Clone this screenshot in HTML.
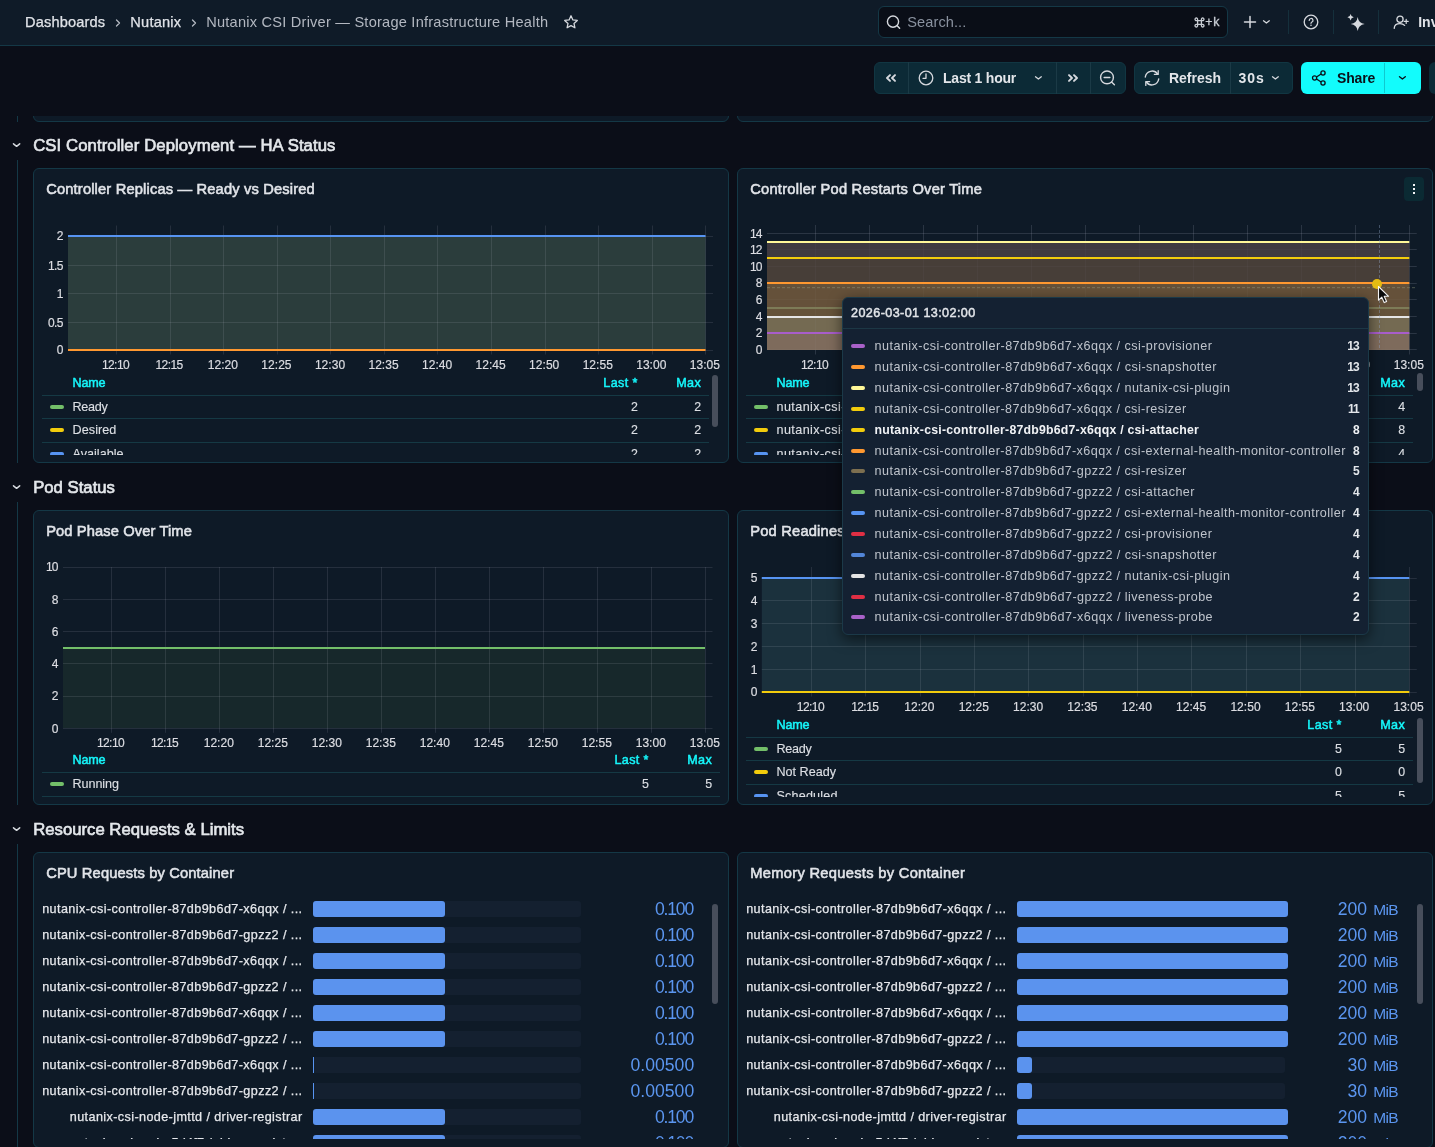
<!DOCTYPE html>
<html><head><meta charset="utf-8"><title>Nutanix CSI Driver — Storage Infrastructure Health</title>
<style>
html,body{margin:0;padding:0;}
body{width:1435px;height:1147px;overflow:hidden;position:relative;background:#0b0e18;font-family:"Liberation Sans",sans-serif;}
div{box-sizing:border-box;}
</style></head><body><div style="position:absolute;left:0;top:0;width:1435px;height:1147px;will-change:transform;">
<div style="position:absolute;left:33px;top:60px;width:696px;height:62px;box-sizing:border-box;background:#0e1a27;border:1px solid #143846;border-radius:6px;"></div>
<div style="position:absolute;left:737px;top:60px;width:696px;height:62px;box-sizing:border-box;background:#0e1a27;border:1px solid #143846;border-radius:6px;"></div>
<div style="position:absolute;left:17px;top:100px;width:1px;height:22px;box-sizing:border-box;background:#143846;"></div>
<div style="position:absolute;left:0px;top:46px;width:1435px;height:70px;box-sizing:border-box;background:#0b0e18;"></div>
<div style="position:absolute;left:0px;top:0px;width:1435px;height:46px;box-sizing:border-box;background:#0f1b28;border-bottom:1px solid #143846;"></div>
<div style="position:absolute;top:12px;height:20px;line-height:20px;font-size:14.6px;color:#e0e3e8;white-space:pre;-webkit-text-stroke:0.25px #e0e3e8;letter-spacing:0.142px;left:25.00px;">Dashboards</div>
<svg style="position:absolute;left:113.5px;top:17.5px;" width="8" height="10" viewBox="0 0 8 10"><path d="M2.5 2 L5.5 5 L2.5 8" fill="none" stroke="#b3b8c1" stroke-width="1.3" stroke-linecap="round" stroke-linejoin="round"/></svg>
<div style="position:absolute;top:12px;height:20px;line-height:20px;font-size:14.6px;color:#e0e3e8;white-space:pre;-webkit-text-stroke:0.25px #e0e3e8;letter-spacing:0.216px;left:130.30px;">Nutanix</div>
<svg style="position:absolute;left:189.7px;top:17.5px;" width="8" height="10" viewBox="0 0 8 10"><path d="M2.5 2 L5.5 5 L2.5 8" fill="none" stroke="#b3b8c1" stroke-width="1.3" stroke-linecap="round" stroke-linejoin="round"/></svg>
<div style="position:absolute;top:12px;height:20px;line-height:20px;font-size:14.6px;color:#b3b8c1;white-space:pre;letter-spacing:0.223px;left:206.20px;">Nutanix CSI Driver — Storage Infrastructure Health</div>
<svg style="position:absolute;left:563px;top:14px;" width="16" height="16" viewBox="0 0 16 16"><path d="M8 1.8 L9.9 5.9 L14.3 6.4 L11 9.4 L11.9 13.8 L8 11.6 L4.1 13.8 L5 9.4 L1.7 6.4 L6.1 5.9 Z" fill="none" stroke="#d6d9de" stroke-width="1.3" stroke-linejoin="round"/></svg>
<div style="position:absolute;left:878px;top:6px;width:350px;height:32px;box-sizing:border-box;background:#0a0e17;border:1px solid #143846;border-radius:6px;"></div>
<svg style="position:absolute;left:885px;top:14px;" width="17" height="17" viewBox="0 0 17 17"><circle cx="8" cy="7.6" r="5.6" fill="none" stroke="#d6d9de" stroke-width="1.4"/><path d="M12.2 11.8 L14.6 14.2" stroke="#d6d9de" stroke-width="1.5" stroke-linecap="round"/></svg>
<div style="position:absolute;top:12px;height:20px;line-height:20px;font-size:14.6px;color:#8a929f;white-space:pre;letter-spacing:0.071px;left:907.30px;">Search...</div>
<svg style="position:absolute;left:1193.5px;top:16.5px;" width="11" height="11" viewBox="0 0 11 11"><path d="M3.6 3.6 H7.4 V7.4 H3.6 Z M3.6 3.6 V2.4 A1.3 1.3 0 1 0 2.4 3.6 Z M7.4 3.6 H8.6 A1.3 1.3 0 1 0 7.4 2.4 Z M7.4 7.4 V8.6 A1.3 1.3 0 1 0 8.6 7.4 Z M3.6 7.4 H2.4 A1.3 1.3 0 1 0 3.6 8.6 Z" fill="none" stroke="#c9cdd4" stroke-width="1.3"/></svg>
<div style="position:absolute;top:13px;height:18px;line-height:18px;font-size:12.4px;color:#c9cdd4;white-space:pre;-webkit-text-stroke:0.3px #c9cdd4;letter-spacing:0.759px;left:1205.30px;">+k</div>
<svg style="position:absolute;left:1243px;top:15px;" width="14" height="14" viewBox="0 0 14 14"><path d="M7 1.5 V12.5 M1.5 7 H12.5" stroke="#d6d9de" stroke-width="1.5" stroke-linecap="round"/></svg>
<svg style="position:absolute;left:1262.3px;top:19.075px;" width="8.8" height="6.25" viewBox="0 0 8.8 6.25"><path d="M1.5 1.8 L4.4 4.05 L7.3 1.8" fill="none" stroke="#d6d9de" stroke-width="1.3" stroke-linecap="round" stroke-linejoin="round"/></svg>
<div style="position:absolute;left:1288.0px;top:10px;width:1px;height:24px;box-sizing:border-box;background:#15303c;"></div>
<div style="position:absolute;left:1333.0px;top:10px;width:1px;height:24px;box-sizing:border-box;background:#15303c;"></div>
<div style="position:absolute;left:1378.0px;top:10px;width:1px;height:24px;box-sizing:border-box;background:#15303c;"></div>
<svg style="position:absolute;left:1302px;top:13px;" width="18" height="18" viewBox="0 0 18 18"><circle cx="9" cy="9" r="6.8" fill="none" stroke="#d6d9de" stroke-width="1.3"/><path d="M7.2 7.4 A1.9 1.9 0 1 1 9.6 9.2 Q9 9.5 9 10.3" fill="none" stroke="#d6d9de" stroke-width="1.2" stroke-linecap="round"/><circle cx="9" cy="12.2" r="0.8" fill="#d6d9de"/></svg>
<svg style="position:absolute;left:1346px;top:12px;" width="20" height="20" viewBox="0 0 20 20"><path d="M11.7 5 Q12.5 11.2 18.7 12 Q12.5 12.8 11.7 19 Q10.9 12.8 4.7 12 Q10.9 11.2 11.7 5 Z" fill="#d6d9de"/><path d="M4.6 2 Q5 4.8 7.8 5.2 Q5 5.6 4.6 8.4 Q4.2 5.6 1.4 5.2 Q4.2 4.8 4.6 2 Z" fill="#d6d9de"/></svg>
<svg style="position:absolute;left:1391px;top:13px;" width="20" height="18" viewBox="0 0 20 18"><circle cx="9" cy="6.2" r="3.1" fill="none" stroke="#d6d9de" stroke-width="1.3"/><path d="M3.2 15.4 Q3.4 10.6 9 10.6 Q12 10.6 13.6 12.4" fill="none" stroke="#d6d9de" stroke-width="1.3" stroke-linecap="round"/><path d="M15.2 6.4 V10.4 M13.2 8.4 H17.2" stroke="#d6d9de" stroke-width="1.2" stroke-linecap="round"/></svg>
<div style="position:absolute;top:12px;height:20px;line-height:20px;font-size:14px;color:#e0e3e8;white-space:pre;font-weight:700;left:1418.20px;">Inv</div>
<div style="position:absolute;left:874px;top:62px;width:252px;height:32px;box-sizing:border-box;background:#0c2a36;border:1px solid #113642;border-radius:6px;"></div>
<div style="position:absolute;left:908px;top:62px;width:1px;height:32px;box-sizing:border-box;background:#1b3a46;"></div>
<div style="position:absolute;left:1056px;top:62px;width:1px;height:32px;box-sizing:border-box;background:#1b3a46;"></div>
<div style="position:absolute;left:1090px;top:62px;width:1px;height:32px;box-sizing:border-box;background:#1b3a46;"></div>
<svg style="position:absolute;left:885px;top:72px;" width="12" height="12" viewBox="0 0 12 12"><path d="M5.0 3.1 L2.0 6 L5.0 8.9 M10.0 3.1 L7.0 6 L10.0 8.9" fill="none" stroke="#d6d9de" stroke-width="1.9" stroke-linecap="round" stroke-linejoin="round"/></svg>
<svg style="position:absolute;left:1067px;top:72px;" width="12" height="12" viewBox="0 0 12 12"><path d="M2.0 3.1 L5.0 6 L2.0 8.9 M7.0 3.1 L10.0 6 L7.0 8.9" fill="none" stroke="#d6d9de" stroke-width="1.9" stroke-linecap="round" stroke-linejoin="round"/></svg>
<svg style="position:absolute;left:917px;top:69px;" width="18" height="18" viewBox="0 0 18 18"><circle cx="9" cy="9" r="6.8" fill="none" stroke="#d6d9de" stroke-width="1.3"/><path d="M9 5 V9.3 H6" fill="none" stroke="#d6d9de" stroke-width="1.3" stroke-linecap="round" stroke-linejoin="round"/></svg>
<div style="position:absolute;top:68px;height:20px;line-height:20px;font-size:14px;color:#e3e6ea;white-space:pre;font-weight:700;letter-spacing:-0.216px;left:943.00px;">Last 1 hour</div>
<svg style="position:absolute;left:1034.3px;top:75.175px;" width="8.8" height="6.25" viewBox="0 0 8.8 6.25"><path d="M1.5 1.8 L4.4 4.05 L7.3 1.8" fill="none" stroke="#d6d9de" stroke-width="1.3" stroke-linecap="round" stroke-linejoin="round"/></svg>
<svg style="position:absolute;left:1099px;top:69px;" width="18" height="18" viewBox="0 0 18 18"><circle cx="8" cy="8.4" r="6.4" fill="none" stroke="#d6d9de" stroke-width="1.4"/><path d="M5.2 8.4 H10.8" stroke="#d6d9de" stroke-width="1.5" stroke-linecap="round"/><path d="M12.8 13.2 L15.4 15.8" stroke="#d6d9de" stroke-width="1.4" stroke-linecap="round"/></svg>
<div style="position:absolute;left:1134px;top:62px;width:159px;height:32px;box-sizing:border-box;background:#0c2a36;border:1px solid #113642;border-radius:6px;"></div>
<div style="position:absolute;left:1230px;top:62px;width:1px;height:32px;box-sizing:border-box;background:#1b3a46;"></div>
<svg style="position:absolute;left:1143px;top:69px;" width="18" height="18" viewBox="0 0 18 18"><path d="M2.3 8 A6.8 6.8 0 0 1 14.6 5 M15.7 10 A6.8 6.8 0 0 1 3.4 13" fill="none" stroke="#d6d9de" stroke-width="1.4" stroke-linecap="round"/><path d="M15.2 1.6 V5.4 H11.4 M2.8 16.4 V12.6 H6.6" fill="none" stroke="#d6d9de" stroke-width="1.3" stroke-linecap="round" stroke-linejoin="round"/></svg>
<div style="position:absolute;top:68px;height:20px;line-height:20px;font-size:14px;color:#e3e6ea;white-space:pre;font-weight:700;letter-spacing:-0.022px;left:1169.00px;">Refresh</div>
<div style="position:absolute;top:68px;height:20px;line-height:20px;font-size:14px;color:#e3e6ea;white-space:pre;font-weight:700;letter-spacing:0.971px;left:1238.50px;">30s</div>
<svg style="position:absolute;left:1271.3999999999999px;top:75.175px;" width="8.8" height="6.25" viewBox="0 0 8.8 6.25"><path d="M1.5 1.8 L4.4 4.05 L7.3 1.8" fill="none" stroke="#d6d9de" stroke-width="1.3" stroke-linecap="round" stroke-linejoin="round"/></svg>
<div style="position:absolute;left:1301px;top:62px;width:120px;height:32px;box-sizing:border-box;background:#12fcfc;border-radius:6px;"></div>
<div style="position:absolute;left:1384px;top:63px;width:1px;height:30px;box-sizing:border-box;background:#0fc9cf;"></div>
<svg style="position:absolute;left:1310px;top:69px;" width="18" height="18" viewBox="0 0 18 18"><circle cx="13" cy="4" r="2.1" fill="none" stroke="#0b1018" stroke-width="1.3"/><circle cx="4.6" cy="9" r="2.1" fill="none" stroke="#0b1018" stroke-width="1.3"/><circle cx="13" cy="14" r="2.1" fill="none" stroke="#0b1018" stroke-width="1.3"/><path d="M6.5 8 L11.1 5 M6.5 10 L11.1 13" stroke="#0b1018" stroke-width="1.3"/></svg>
<div style="position:absolute;top:68px;height:20px;line-height:20px;font-size:14px;color:#0b1018;white-space:pre;font-weight:700;letter-spacing:-0.153px;left:1337.00px;">Share</div>
<svg style="position:absolute;left:1398.3px;top:75.175px;" width="8.8" height="6.25" viewBox="0 0 8.8 6.25"><path d="M1.5 1.8 L4.4 4.05 L7.3 1.8" fill="none" stroke="#0b1018" stroke-width="1.4" stroke-linecap="round" stroke-linejoin="round"/></svg>
<div style="position:absolute;left:1429px;top:62px;width:20px;height:32px;box-sizing:border-box;background:#0c2a36;border-radius:6px;"></div>
<svg style="position:absolute;left:12.1px;top:141.95px;" width="9.2" height="6.5" viewBox="0 0 9.2 6.5"><path d="M1.5 1.8 L4.6 4.3 L7.7 1.8" fill="none" stroke="#d6d9de" stroke-width="1.5" stroke-linecap="round" stroke-linejoin="round"/></svg>
<div style="position:absolute;top:134px;height:23px;line-height:23px;font-size:16.7px;color:#e4e7eb;white-space:pre;-webkit-text-stroke:0.65px #e4e7eb;letter-spacing:0.101px;left:33.20px;">CSI Controller Deployment — HA Status</div>
<div style="position:absolute;left:17px;top:160px;width:1px;height:303px;box-sizing:border-box;background:#143846;"></div>
<div style="position:absolute;left:33px;top:168px;width:696px;height:295px;box-sizing:border-box;background:#0e1a27;border:1px solid #143846;border-radius:6px;"></div>
<div style="position:absolute;top:179px;height:20px;line-height:20px;font-size:14.7px;color:#e1e4e9;white-space:pre;-webkit-text-stroke:0.55px #e1e4e9;letter-spacing:0.155px;left:46.20px;">Controller Replicas — Ready vs Desired</div>
<div style="position:absolute;left:737px;top:168px;width:696px;height:295px;box-sizing:border-box;background:#0e1a27;border:1px solid #143846;border-radius:6px;"></div>
<div style="position:absolute;top:179px;height:20px;line-height:20px;font-size:14.7px;color:#e1e4e9;white-space:pre;-webkit-text-stroke:0.55px #e1e4e9;letter-spacing:0.229px;left:750.20px;">Controller Pod Restarts Over Time</div>
<div style="position:absolute;left:1404px;top:177px;width:20px;height:24px;box-sizing:border-box;background:#0b2a33;border-radius:4px;"></div>
<div style="position:absolute;left:1413.2px;top:184.2px;width:2px;height:2px;box-sizing:border-box;background:#f2f4f6;"></div>
<div style="position:absolute;left:1413.2px;top:188.2px;width:2px;height:2px;box-sizing:border-box;background:#f2f4f6;"></div>
<div style="position:absolute;left:1413.2px;top:192.2px;width:2px;height:2px;box-sizing:border-box;background:#f2f4f6;"></div>
<svg style="position:absolute;left:33px;top:168px;" width="696" height="296" viewBox="0 0 696 296"><rect x="35.00" y="68.00" width="637.50" height="114.00" fill="#2b3d3c"/><path d="M83.50 57.50 V186.50 M137.50 57.50 V186.50 M190.50 57.50 V186.50 M244.50 57.50 V186.50 M297.50 57.50 V186.50 M351.50 57.50 V186.50 M404.50 57.50 V186.50 M458.50 57.50 V186.50 M512.50 57.50 V186.50 M565.50 57.50 V186.50 M619.50 57.50 V186.50 M672.50 57.50 V186.50 M35.00 68.50 H680.00 M35.00 97.50 H680.00 M35.00 125.50 H680.00 M35.00 154.50 H680.00 M35.00 182.50 H680.00" stroke="rgba(204,204,220,0.12)" stroke-width="1" fill="none"/><path d="M35.00 68.00 H672.50" stroke="#5794f2" stroke-width="2" fill="none"/><path d="M35.00 182.00 H672.50" stroke="#ff9830" stroke-width="2" fill="none"/></svg>
<div style="position:absolute;top:227px;height:18px;line-height:18px;font-size:12px;color:#dcdde2;white-space:pre;-webkit-text-stroke:0.2px #dcdde2;left:56.83px;">2</div>
<div style="position:absolute;top:257px;height:18px;line-height:18px;font-size:12px;color:#dcdde2;white-space:pre;-webkit-text-stroke:0.2px #dcdde2;letter-spacing:-0.584px;left:47.99px;">1.5</div>
<div style="position:absolute;top:285px;height:18px;line-height:18px;font-size:12px;color:#dcdde2;white-space:pre;-webkit-text-stroke:0.2px #dcdde2;left:56.83px;">1</div>
<div style="position:absolute;top:314px;height:18px;line-height:18px;font-size:12px;color:#dcdde2;white-space:pre;-webkit-text-stroke:0.2px #dcdde2;letter-spacing:-0.584px;left:47.99px;">0.5</div>
<div style="position:absolute;top:341px;height:18px;line-height:18px;font-size:12px;color:#dcdde2;white-space:pre;-webkit-text-stroke:0.2px #dcdde2;left:56.83px;">0</div>
<div style="position:absolute;top:356px;height:18px;line-height:18px;font-size:12px;color:#dcdde2;white-space:pre;-webkit-text-stroke:0.2px #dcdde2;letter-spacing:-0.557px;left:101.90px;">12:10</div>
<div style="position:absolute;top:356px;height:18px;line-height:18px;font-size:12px;color:#dcdde2;white-space:pre;-webkit-text-stroke:0.2px #dcdde2;letter-spacing:-0.557px;left:155.45px;">12:15</div>
<div style="position:absolute;top:356px;height:18px;line-height:18px;font-size:12px;color:#dcdde2;white-space:pre;-webkit-text-stroke:0.2px #dcdde2;letter-spacing:0.043px;left:207.80px;">12:20</div>
<div style="position:absolute;top:356px;height:18px;line-height:18px;font-size:12px;color:#dcdde2;white-space:pre;-webkit-text-stroke:0.2px #dcdde2;letter-spacing:0.043px;left:261.35px;">12:25</div>
<div style="position:absolute;top:356px;height:18px;line-height:18px;font-size:12px;color:#dcdde2;white-space:pre;-webkit-text-stroke:0.2px #dcdde2;letter-spacing:0.043px;left:314.90px;">12:30</div>
<div style="position:absolute;top:356px;height:18px;line-height:18px;font-size:12px;color:#dcdde2;white-space:pre;-webkit-text-stroke:0.2px #dcdde2;letter-spacing:0.043px;left:368.45px;">12:35</div>
<div style="position:absolute;top:356px;height:18px;line-height:18px;font-size:12px;color:#dcdde2;white-space:pre;-webkit-text-stroke:0.2px #dcdde2;letter-spacing:0.043px;left:422.00px;">12:40</div>
<div style="position:absolute;top:356px;height:18px;line-height:18px;font-size:12px;color:#dcdde2;white-space:pre;-webkit-text-stroke:0.2px #dcdde2;letter-spacing:0.043px;left:475.55px;">12:45</div>
<div style="position:absolute;top:356px;height:18px;line-height:18px;font-size:12px;color:#dcdde2;white-space:pre;-webkit-text-stroke:0.2px #dcdde2;letter-spacing:0.043px;left:529.10px;">12:50</div>
<div style="position:absolute;top:356px;height:18px;line-height:18px;font-size:12px;color:#dcdde2;white-space:pre;-webkit-text-stroke:0.2px #dcdde2;letter-spacing:0.043px;left:582.65px;">12:55</div>
<div style="position:absolute;top:356px;height:18px;line-height:18px;font-size:12px;color:#dcdde2;white-space:pre;-webkit-text-stroke:0.2px #dcdde2;letter-spacing:0.043px;left:636.20px;">13:00</div>
<div style="position:absolute;top:356px;height:18px;line-height:18px;font-size:12px;color:#dcdde2;white-space:pre;-webkit-text-stroke:0.2px #dcdde2;letter-spacing:0.043px;left:689.75px;">13:05</div>
<div style="position:absolute;top:374px;height:18px;line-height:18px;font-size:12.6px;color:#16f5fa;white-space:pre;-webkit-text-stroke:0.5px #16f5fa;letter-spacing:-0.204px;left:72.50px;">Name</div>
<div style="position:absolute;top:374px;height:18px;line-height:18px;font-size:12.6px;color:#16f5fa;white-space:pre;-webkit-text-stroke:0.5px #16f5fa;letter-spacing:0.356px;left:603.30px;">Last *</div>
<div style="position:absolute;top:374px;height:18px;line-height:18px;font-size:12.6px;color:#16f5fa;white-space:pre;-webkit-text-stroke:0.5px #16f5fa;letter-spacing:0.348px;left:676.20px;">Max</div>
<div style="position:absolute;left:42px;top:395px;width:667px;height:60px;box-sizing:border-box;overflow:hidden;"><div style="position:absolute;left:0px;top:0px;width:667px;height:1px;box-sizing:border-box;background:#153944;"></div><div style="position:absolute;left:8px;top:9.6px;width:14px;height:4px;box-sizing:border-box;background:#73bf69;border-radius:2px;"></div><div style="position:absolute;top:3px;height:18px;line-height:18px;font-size:12.6px;color:#dcdfe4;white-space:pre;-webkit-text-stroke:0.15px #dcdfe4;letter-spacing:-0.256px;left:30.50px;">Ready</div><div style="position:absolute;top:3px;height:18px;line-height:18px;font-size:12.4px;color:#dcdfe4;white-space:pre;-webkit-text-stroke:0.15px #dcdfe4;left:588.90px;">2</div><div style="position:absolute;top:3px;height:18px;line-height:18px;font-size:12.4px;color:#dcdfe4;white-space:pre;-webkit-text-stroke:0.15px #dcdfe4;left:652.30px;">2</div><div style="position:absolute;left:0px;top:23px;width:667px;height:1px;box-sizing:border-box;background:#153944;"></div><div style="position:absolute;left:8px;top:32.6px;width:14px;height:4px;box-sizing:border-box;background:#f2cc0c;border-radius:2px;"></div><div style="position:absolute;top:26px;height:18px;line-height:18px;font-size:12.6px;color:#dcdfe4;white-space:pre;-webkit-text-stroke:0.15px #dcdfe4;letter-spacing:0.080px;left:30.50px;">Desired</div><div style="position:absolute;top:26px;height:18px;line-height:18px;font-size:12.4px;color:#dcdfe4;white-space:pre;-webkit-text-stroke:0.15px #dcdfe4;left:588.90px;">2</div><div style="position:absolute;top:26px;height:18px;line-height:18px;font-size:12.4px;color:#dcdfe4;white-space:pre;-webkit-text-stroke:0.15px #dcdfe4;left:652.30px;">2</div><div style="position:absolute;left:0px;top:47px;width:667px;height:1px;box-sizing:border-box;background:#153944;"></div><div style="position:absolute;left:8px;top:56.6px;width:14px;height:4px;box-sizing:border-box;background:#5794f2;border-radius:2px;"></div><div style="position:absolute;top:50px;height:18px;line-height:18px;font-size:12.6px;color:#dcdfe4;white-space:pre;-webkit-text-stroke:0.15px #dcdfe4;letter-spacing:0.012px;left:30.50px;">Available</div><div style="position:absolute;top:50px;height:18px;line-height:18px;font-size:12.4px;color:#dcdfe4;white-space:pre;-webkit-text-stroke:0.15px #dcdfe4;left:588.90px;">2</div><div style="position:absolute;top:50px;height:18px;line-height:18px;font-size:12.4px;color:#dcdfe4;white-space:pre;-webkit-text-stroke:0.15px #dcdfe4;left:652.30px;">2</div><div style="position:absolute;left:0px;top:70px;width:667px;height:1px;box-sizing:border-box;background:#153944;"></div></div>
<div style="position:absolute;left:712px;top:375px;width:6px;height:52.30000000000001px;box-sizing:border-box;background:#474e5b;border-radius:3px;"></div>
<svg style="position:absolute;left:737px;top:168px;" width="696" height="296" viewBox="0 0 696 296"><path d="M78.50 57.00 V186.50 M132.50 57.00 V186.50 M186.50 57.00 V186.50 M240.50 57.00 V186.50 M294.50 57.00 V186.50 M348.50 57.00 V186.50 M402.50 57.00 V186.50 M456.50 57.00 V186.50 M510.50 57.00 V186.50 M564.50 57.00 V186.50 M618.50 57.00 V186.50 M672.50 57.00 V186.50 M30.00 65.50 H679.80 M30.00 81.50 H679.80 M30.00 98.50 H679.80 M30.00 115.50 H679.80 M30.00 131.50 H679.80 M30.00 148.50 H679.80 M30.00 165.50 H679.80 M30.00 181.50 H679.80" stroke="rgba(204,204,220,0.12)" stroke-width="1" fill="none"/><rect x="30.00" y="74.00" width="642.30" height="16.00" fill="#3f3a40"/><rect x="30.00" y="90.00" width="642.30" height="25.00" fill="#473e38"/><rect x="30.00" y="115.00" width="642.30" height="25.00" fill="#65513a"/><rect x="30.00" y="140.00" width="642.30" height="9.00" fill="#65533a"/><rect x="30.00" y="149.00" width="642.30" height="16.00" fill="#746a52"/><rect x="30.00" y="165.00" width="642.30" height="17.00" fill="#7e6b5c"/><path d="M78.50 57.00 V186.50 M132.50 57.00 V186.50 M186.50 57.00 V186.50 M240.50 57.00 V186.50 M294.50 57.00 V186.50 M348.50 57.00 V186.50 M402.50 57.00 V186.50 M456.50 57.00 V186.50 M510.50 57.00 V186.50 M564.50 57.00 V186.50 M618.50 57.00 V186.50 M672.50 57.00 V186.50 M30.00 65.50 H679.80 M30.00 81.50 H679.80 M30.00 98.50 H679.80 M30.00 115.50 H679.80 M30.00 131.50 H679.80 M30.00 148.50 H679.80 M30.00 165.50 H679.80 M30.00 181.50 H679.80" stroke="rgba(204,204,220,0.035)" stroke-width="1" fill="none"/><path d="M30.00 165.00 H672.30" stroke="#a85dcb" stroke-width="2" fill="none"/><path d="M30.00 149.00 H672.30" stroke="#e6e6e6" stroke-width="2" fill="none"/><path d="M30.00 140.00 H672.30" stroke="#7d7b57" stroke-width="2" fill="none"/><path d="M30.00 115.00 H672.30" stroke="#ff9830" stroke-width="2" fill="none"/><path d="M30.00 90.00 H672.30" stroke="#f2cc0c" stroke-width="2" fill="none"/><path d="M30.00 74.00 H672.30" stroke="#fff899" stroke-width="2" fill="none"/><path d="M642.50 57.00 V182.00" stroke="rgba(150,170,205,0.38)" stroke-width="1" stroke-dasharray="3 2" fill="none"/><path d="M30.00 119.70 H679.80" stroke="rgba(160,170,135,0.42)" stroke-width="1" stroke-dasharray="3 2" fill="none"/></svg>
<div style="position:absolute;top:225px;height:18px;line-height:18px;font-size:12px;color:#dcdde2;white-space:pre;-webkit-text-stroke:0.2px #dcdde2;letter-spacing:-0.934px;left:749.99px;">14</div>
<div style="position:absolute;top:241px;height:18px;line-height:18px;font-size:12px;color:#dcdde2;white-space:pre;-webkit-text-stroke:0.2px #dcdde2;letter-spacing:-0.934px;left:749.99px;">12</div>
<div style="position:absolute;top:258px;height:18px;line-height:18px;font-size:12px;color:#dcdde2;white-space:pre;-webkit-text-stroke:0.2px #dcdde2;letter-spacing:-0.934px;left:749.99px;">10</div>
<div style="position:absolute;top:274px;height:18px;line-height:18px;font-size:12px;color:#dcdde2;white-space:pre;-webkit-text-stroke:0.2px #dcdde2;left:755.73px;">8</div>
<div style="position:absolute;top:291px;height:18px;line-height:18px;font-size:12px;color:#dcdde2;white-space:pre;-webkit-text-stroke:0.2px #dcdde2;left:755.73px;">6</div>
<div style="position:absolute;top:308px;height:18px;line-height:18px;font-size:12px;color:#dcdde2;white-space:pre;-webkit-text-stroke:0.2px #dcdde2;left:755.73px;">4</div>
<div style="position:absolute;top:324px;height:18px;line-height:18px;font-size:12px;color:#dcdde2;white-space:pre;-webkit-text-stroke:0.2px #dcdde2;left:755.73px;">2</div>
<div style="position:absolute;top:341px;height:18px;line-height:18px;font-size:12px;color:#dcdde2;white-space:pre;-webkit-text-stroke:0.2px #dcdde2;left:755.73px;">0</div>
<div style="position:absolute;top:356px;height:18px;line-height:18px;font-size:12px;color:#dcdde2;white-space:pre;-webkit-text-stroke:0.2px #dcdde2;letter-spacing:-0.557px;left:800.90px;">12:10</div>
<div style="position:absolute;top:356px;height:18px;line-height:18px;font-size:12px;color:#dcdde2;white-space:pre;-webkit-text-stroke:0.2px #dcdde2;letter-spacing:-0.557px;left:854.90px;">12:15</div>
<div style="position:absolute;top:356px;height:18px;line-height:18px;font-size:12px;color:#dcdde2;white-space:pre;-webkit-text-stroke:0.2px #dcdde2;letter-spacing:0.043px;left:907.70px;">12:20</div>
<div style="position:absolute;top:356px;height:18px;line-height:18px;font-size:12px;color:#dcdde2;white-space:pre;-webkit-text-stroke:0.2px #dcdde2;letter-spacing:0.043px;left:961.70px;">12:25</div>
<div style="position:absolute;top:356px;height:18px;line-height:18px;font-size:12px;color:#dcdde2;white-space:pre;-webkit-text-stroke:0.2px #dcdde2;letter-spacing:0.043px;left:1015.70px;">12:30</div>
<div style="position:absolute;top:356px;height:18px;line-height:18px;font-size:12px;color:#dcdde2;white-space:pre;-webkit-text-stroke:0.2px #dcdde2;letter-spacing:0.043px;left:1069.70px;">12:35</div>
<div style="position:absolute;top:356px;height:18px;line-height:18px;font-size:12px;color:#dcdde2;white-space:pre;-webkit-text-stroke:0.2px #dcdde2;letter-spacing:0.043px;left:1123.70px;">12:40</div>
<div style="position:absolute;top:356px;height:18px;line-height:18px;font-size:12px;color:#dcdde2;white-space:pre;-webkit-text-stroke:0.2px #dcdde2;letter-spacing:0.043px;left:1177.70px;">12:45</div>
<div style="position:absolute;top:356px;height:18px;line-height:18px;font-size:12px;color:#dcdde2;white-space:pre;-webkit-text-stroke:0.2px #dcdde2;letter-spacing:0.043px;left:1231.70px;">12:50</div>
<div style="position:absolute;top:356px;height:18px;line-height:18px;font-size:12px;color:#dcdde2;white-space:pre;-webkit-text-stroke:0.2px #dcdde2;letter-spacing:0.043px;left:1285.70px;">12:55</div>
<div style="position:absolute;top:356px;height:18px;line-height:18px;font-size:12px;color:#dcdde2;white-space:pre;-webkit-text-stroke:0.2px #dcdde2;letter-spacing:0.043px;left:1339.70px;">13:00</div>
<div style="position:absolute;top:356px;height:18px;line-height:18px;font-size:12px;color:#dcdde2;white-space:pre;-webkit-text-stroke:0.2px #dcdde2;letter-spacing:0.043px;left:1393.70px;">13:05</div>
<div style="position:absolute;top:374px;height:18px;line-height:18px;font-size:12.6px;color:#16f5fa;white-space:pre;-webkit-text-stroke:0.5px #16f5fa;letter-spacing:-0.204px;left:776.50px;">Name</div>
<div style="position:absolute;top:374px;height:18px;line-height:18px;font-size:12.6px;color:#16f5fa;white-space:pre;-webkit-text-stroke:0.5px #16f5fa;letter-spacing:0.356px;left:1307.30px;">Last *</div>
<div style="position:absolute;top:374px;height:18px;line-height:18px;font-size:12.6px;color:#16f5fa;white-space:pre;-webkit-text-stroke:0.5px #16f5fa;letter-spacing:0.348px;left:1380.20px;">Max</div>
<div style="position:absolute;left:746px;top:395px;width:667px;height:60px;box-sizing:border-box;overflow:hidden;"><div style="position:absolute;left:0px;top:0px;width:667px;height:1px;box-sizing:border-box;background:#153944;"></div><div style="position:absolute;left:8px;top:9.6px;width:14px;height:4px;box-sizing:border-box;background:#73bf69;border-radius:2px;"></div><div style="position:absolute;top:3px;height:18px;line-height:18px;font-size:12.6px;color:#dcdfe4;white-space:pre;-webkit-text-stroke:0.15px #dcdfe4;letter-spacing:0.408px;left:30.50px;">nutanix-csi-controller-87db9b6d7-gpzz2 / csi-attacher</div><div style="position:absolute;top:3px;height:18px;line-height:18px;font-size:12.4px;color:#dcdfe4;white-space:pre;-webkit-text-stroke:0.15px #dcdfe4;left:588.90px;">4</div><div style="position:absolute;top:3px;height:18px;line-height:18px;font-size:12.4px;color:#dcdfe4;white-space:pre;-webkit-text-stroke:0.15px #dcdfe4;left:652.30px;">4</div><div style="position:absolute;left:0px;top:23px;width:667px;height:1px;box-sizing:border-box;background:#153944;"></div><div style="position:absolute;left:8px;top:32.6px;width:14px;height:4px;box-sizing:border-box;background:#f2cc0c;border-radius:2px;"></div><div style="position:absolute;top:26px;height:18px;line-height:18px;font-size:12.6px;color:#dcdfe4;white-space:pre;-webkit-text-stroke:0.15px #dcdfe4;letter-spacing:0.408px;left:30.50px;">nutanix-csi-controller-87db9b6d7-x6qqx / csi-attacher</div><div style="position:absolute;top:26px;height:18px;line-height:18px;font-size:12.4px;color:#dcdfe4;white-space:pre;-webkit-text-stroke:0.15px #dcdfe4;left:588.90px;">8</div><div style="position:absolute;top:26px;height:18px;line-height:18px;font-size:12.4px;color:#dcdfe4;white-space:pre;-webkit-text-stroke:0.15px #dcdfe4;left:652.30px;">8</div><div style="position:absolute;left:0px;top:47px;width:667px;height:1px;box-sizing:border-box;background:#153944;"></div><div style="position:absolute;left:8px;top:56.6px;width:14px;height:4px;box-sizing:border-box;background:#5794f2;border-radius:2px;"></div><div style="position:absolute;top:50px;height:18px;line-height:18px;font-size:12.6px;color:#dcdfe4;white-space:pre;-webkit-text-stroke:0.15px #dcdfe4;letter-spacing:0.400px;left:30.50px;">nutanix-csi-controller-87db9b6d7-gpzz2 / csi-external-health-monitor-controller</div><div style="position:absolute;top:50px;height:18px;line-height:18px;font-size:12.4px;color:#dcdfe4;white-space:pre;-webkit-text-stroke:0.15px #dcdfe4;left:588.90px;">4</div><div style="position:absolute;top:50px;height:18px;line-height:18px;font-size:12.4px;color:#dcdfe4;white-space:pre;-webkit-text-stroke:0.15px #dcdfe4;left:652.30px;">4</div><div style="position:absolute;left:0px;top:70px;width:667px;height:1px;box-sizing:border-box;background:#153944;"></div></div>
<div style="position:absolute;left:1416.5px;top:372.5px;width:6px;height:18.5px;box-sizing:border-box;background:#474e5b;border-radius:3px;"></div>
<div style="position:absolute;left:1372px;top:279px;width:10px;height:10px;box-sizing:border-box;background:#e4bb12;border-radius:5px;"></div>
<svg style="position:absolute;left:12.1px;top:484.05px;" width="9.2" height="6.5" viewBox="0 0 9.2 6.5"><path d="M1.5 1.8 L4.6 4.3 L7.7 1.8" fill="none" stroke="#d6d9de" stroke-width="1.5" stroke-linecap="round" stroke-linejoin="round"/></svg>
<div style="position:absolute;top:476px;height:23px;line-height:23px;font-size:16.7px;color:#e4e7eb;white-space:pre;-webkit-text-stroke:0.65px #e4e7eb;letter-spacing:0.011px;left:33.20px;">Pod Status</div>
<div style="position:absolute;left:17px;top:502px;width:1px;height:303px;box-sizing:border-box;background:#143846;"></div>
<div style="position:absolute;left:33px;top:510px;width:696px;height:295px;box-sizing:border-box;background:#0e1a27;border:1px solid #143846;border-radius:6px;"></div>
<div style="position:absolute;top:521px;height:20px;line-height:20px;font-size:14.7px;color:#e1e4e9;white-space:pre;-webkit-text-stroke:0.55px #e1e4e9;letter-spacing:0.111px;left:46.20px;">Pod Phase Over Time</div>
<div style="position:absolute;left:737px;top:510px;width:696px;height:295px;box-sizing:border-box;background:#0e1a27;border:1px solid #143846;border-radius:6px;"></div>
<div style="position:absolute;top:521px;height:20px;line-height:20px;font-size:14.7px;color:#e1e4e9;white-space:pre;-webkit-text-stroke:0.55px #e1e4e9;letter-spacing:0.201px;left:750.20px;">Pod Readiness Over Time</div>
<svg style="position:absolute;left:33px;top:510px;" width="696" height="296" viewBox="0 0 696 296"><rect x="30.00" y="138.00" width="642.00" height="80.00" fill="#17282b"/><path d="M78.50 57.00 V222.80 M132.50 57.00 V222.80 M186.50 57.00 V222.80 M240.50 57.00 V222.80 M294.50 57.00 V222.80 M348.50 57.00 V222.80 M402.50 57.00 V222.80 M456.50 57.00 V222.80 M510.50 57.00 V222.80 M564.50 57.00 V222.80 M618.50 57.00 V222.80 M672.50 57.00 V222.80 M30.00 57.50 H679.50 M30.00 89.50 H679.50 M30.00 121.50 H679.50 M30.00 153.50 H679.50 M30.00 186.50 H679.50 M30.00 218.50 H679.50" stroke="rgba(204,204,220,0.12)" stroke-width="1" fill="none"/><path d="M30.00 138.00 H672.00" stroke="#73bf69" stroke-width="2" fill="none"/></svg>
<div style="position:absolute;top:558px;height:18px;line-height:18px;font-size:12px;color:#dcdde2;white-space:pre;-webkit-text-stroke:0.2px #dcdde2;letter-spacing:-0.934px;left:45.99px;">10</div>
<div style="position:absolute;top:591px;height:18px;line-height:18px;font-size:12px;color:#dcdde2;white-space:pre;-webkit-text-stroke:0.2px #dcdde2;left:51.73px;">8</div>
<div style="position:absolute;top:623px;height:18px;line-height:18px;font-size:12px;color:#dcdde2;white-space:pre;-webkit-text-stroke:0.2px #dcdde2;left:51.73px;">6</div>
<div style="position:absolute;top:655px;height:18px;line-height:18px;font-size:12px;color:#dcdde2;white-space:pre;-webkit-text-stroke:0.2px #dcdde2;left:51.73px;">4</div>
<div style="position:absolute;top:687px;height:18px;line-height:18px;font-size:12px;color:#dcdde2;white-space:pre;-webkit-text-stroke:0.2px #dcdde2;left:51.73px;">2</div>
<div style="position:absolute;top:720px;height:18px;line-height:18px;font-size:12px;color:#dcdde2;white-space:pre;-webkit-text-stroke:0.2px #dcdde2;left:51.73px;">0</div>
<div style="position:absolute;top:734px;height:18px;line-height:18px;font-size:12px;color:#dcdde2;white-space:pre;-webkit-text-stroke:0.2px #dcdde2;letter-spacing:-0.557px;left:96.90px;">12:10</div>
<div style="position:absolute;top:734px;height:18px;line-height:18px;font-size:12px;color:#dcdde2;white-space:pre;-webkit-text-stroke:0.2px #dcdde2;letter-spacing:-0.557px;left:150.90px;">12:15</div>
<div style="position:absolute;top:734px;height:18px;line-height:18px;font-size:12px;color:#dcdde2;white-space:pre;-webkit-text-stroke:0.2px #dcdde2;letter-spacing:0.043px;left:203.70px;">12:20</div>
<div style="position:absolute;top:734px;height:18px;line-height:18px;font-size:12px;color:#dcdde2;white-space:pre;-webkit-text-stroke:0.2px #dcdde2;letter-spacing:0.043px;left:257.70px;">12:25</div>
<div style="position:absolute;top:734px;height:18px;line-height:18px;font-size:12px;color:#dcdde2;white-space:pre;-webkit-text-stroke:0.2px #dcdde2;letter-spacing:0.043px;left:311.70px;">12:30</div>
<div style="position:absolute;top:734px;height:18px;line-height:18px;font-size:12px;color:#dcdde2;white-space:pre;-webkit-text-stroke:0.2px #dcdde2;letter-spacing:0.043px;left:365.70px;">12:35</div>
<div style="position:absolute;top:734px;height:18px;line-height:18px;font-size:12px;color:#dcdde2;white-space:pre;-webkit-text-stroke:0.2px #dcdde2;letter-spacing:0.043px;left:419.70px;">12:40</div>
<div style="position:absolute;top:734px;height:18px;line-height:18px;font-size:12px;color:#dcdde2;white-space:pre;-webkit-text-stroke:0.2px #dcdde2;letter-spacing:0.043px;left:473.70px;">12:45</div>
<div style="position:absolute;top:734px;height:18px;line-height:18px;font-size:12px;color:#dcdde2;white-space:pre;-webkit-text-stroke:0.2px #dcdde2;letter-spacing:0.043px;left:527.70px;">12:50</div>
<div style="position:absolute;top:734px;height:18px;line-height:18px;font-size:12px;color:#dcdde2;white-space:pre;-webkit-text-stroke:0.2px #dcdde2;letter-spacing:0.043px;left:581.70px;">12:55</div>
<div style="position:absolute;top:734px;height:18px;line-height:18px;font-size:12px;color:#dcdde2;white-space:pre;-webkit-text-stroke:0.2px #dcdde2;letter-spacing:0.043px;left:635.70px;">13:00</div>
<div style="position:absolute;top:734px;height:18px;line-height:18px;font-size:12px;color:#dcdde2;white-space:pre;-webkit-text-stroke:0.2px #dcdde2;letter-spacing:0.043px;left:689.70px;">13:05</div>
<div style="position:absolute;top:751px;height:18px;line-height:18px;font-size:12.6px;color:#16f5fa;white-space:pre;-webkit-text-stroke:0.5px #16f5fa;letter-spacing:-0.204px;left:72.50px;">Name</div>
<div style="position:absolute;top:751px;height:18px;line-height:18px;font-size:12.6px;color:#16f5fa;white-space:pre;-webkit-text-stroke:0.5px #16f5fa;letter-spacing:0.356px;left:614.50px;">Last *</div>
<div style="position:absolute;top:751px;height:18px;line-height:18px;font-size:12.6px;color:#16f5fa;white-space:pre;-webkit-text-stroke:0.5px #16f5fa;letter-spacing:0.348px;left:687.20px;">Max</div>
<div style="position:absolute;left:42px;top:772px;width:678px;height:28px;box-sizing:border-box;overflow:hidden;"><div style="position:absolute;left:0px;top:0px;width:678px;height:1px;box-sizing:border-box;background:#153944;"></div><div style="position:absolute;left:8px;top:9.6px;width:14px;height:4px;box-sizing:border-box;background:#73bf69;border-radius:2px;"></div><div style="position:absolute;top:3px;height:18px;line-height:18px;font-size:12.6px;color:#dcdfe4;white-space:pre;-webkit-text-stroke:0.15px #dcdfe4;letter-spacing:-0.073px;left:30.50px;">Running</div><div style="position:absolute;top:3px;height:18px;line-height:18px;font-size:12.4px;color:#dcdfe4;white-space:pre;-webkit-text-stroke:0.15px #dcdfe4;left:600.10px;">5</div><div style="position:absolute;top:3px;height:18px;line-height:18px;font-size:12.4px;color:#dcdfe4;white-space:pre;-webkit-text-stroke:0.15px #dcdfe4;left:663.30px;">5</div><div style="position:absolute;left:0px;top:24px;width:678px;height:1px;box-sizing:border-box;background:#153944;"></div></div>
<svg style="position:absolute;left:737px;top:510px;" width="696" height="296" viewBox="0 0 696 296"><rect x="24.80" y="68.00" width="647.50" height="114.00" fill="#1b313d"/><path d="M74.50 57.00 V186.50 M128.50 57.00 V186.50 M183.50 57.00 V186.50 M237.50 57.00 V186.50 M291.50 57.00 V186.50 M346.50 57.00 V186.50 M400.50 57.00 V186.50 M454.50 57.00 V186.50 M509.50 57.00 V186.50 M563.50 57.00 V186.50 M618.50 57.00 V186.50 M672.50 57.00 V186.50 M24.80 68.50 H679.80 M24.80 90.50 H679.80 M24.80 113.50 H679.80 M24.80 136.50 H679.80 M24.80 159.50 H679.80 M24.80 182.50 H679.80" stroke="rgba(204,204,220,0.12)" stroke-width="1" fill="none"/><path d="M24.80 68.00 H672.30" stroke="#5794f2" stroke-width="2" fill="none"/><path d="M24.80 182.00 H672.30" stroke="#f2cc0c" stroke-width="2" fill="none"/></svg>
<div style="position:absolute;top:569px;height:18px;line-height:18px;font-size:12px;color:#dcdde2;white-space:pre;-webkit-text-stroke:0.2px #dcdde2;left:750.73px;">5</div>
<div style="position:absolute;top:592px;height:18px;line-height:18px;font-size:12px;color:#dcdde2;white-space:pre;-webkit-text-stroke:0.2px #dcdde2;left:750.73px;">4</div>
<div style="position:absolute;top:615px;height:18px;line-height:18px;font-size:12px;color:#dcdde2;white-space:pre;-webkit-text-stroke:0.2px #dcdde2;left:750.73px;">3</div>
<div style="position:absolute;top:638px;height:18px;line-height:18px;font-size:12px;color:#dcdde2;white-space:pre;-webkit-text-stroke:0.2px #dcdde2;left:750.73px;">2</div>
<div style="position:absolute;top:661px;height:18px;line-height:18px;font-size:12px;color:#dcdde2;white-space:pre;-webkit-text-stroke:0.2px #dcdde2;left:750.73px;">1</div>
<div style="position:absolute;top:683px;height:18px;line-height:18px;font-size:12px;color:#dcdde2;white-space:pre;-webkit-text-stroke:0.2px #dcdde2;left:750.73px;">0</div>
<div style="position:absolute;top:698px;height:18px;line-height:18px;font-size:12px;color:#dcdde2;white-space:pre;-webkit-text-stroke:0.2px #dcdde2;letter-spacing:-0.557px;left:796.80px;">12:10</div>
<div style="position:absolute;top:698px;height:18px;line-height:18px;font-size:12px;color:#dcdde2;white-space:pre;-webkit-text-stroke:0.2px #dcdde2;letter-spacing:-0.557px;left:851.15px;">12:15</div>
<div style="position:absolute;top:698px;height:18px;line-height:18px;font-size:12px;color:#dcdde2;white-space:pre;-webkit-text-stroke:0.2px #dcdde2;letter-spacing:0.043px;left:904.30px;">12:20</div>
<div style="position:absolute;top:698px;height:18px;line-height:18px;font-size:12px;color:#dcdde2;white-space:pre;-webkit-text-stroke:0.2px #dcdde2;letter-spacing:0.043px;left:958.65px;">12:25</div>
<div style="position:absolute;top:698px;height:18px;line-height:18px;font-size:12px;color:#dcdde2;white-space:pre;-webkit-text-stroke:0.2px #dcdde2;letter-spacing:0.043px;left:1013.00px;">12:30</div>
<div style="position:absolute;top:698px;height:18px;line-height:18px;font-size:12px;color:#dcdde2;white-space:pre;-webkit-text-stroke:0.2px #dcdde2;letter-spacing:0.043px;left:1067.35px;">12:35</div>
<div style="position:absolute;top:698px;height:18px;line-height:18px;font-size:12px;color:#dcdde2;white-space:pre;-webkit-text-stroke:0.2px #dcdde2;letter-spacing:0.043px;left:1121.70px;">12:40</div>
<div style="position:absolute;top:698px;height:18px;line-height:18px;font-size:12px;color:#dcdde2;white-space:pre;-webkit-text-stroke:0.2px #dcdde2;letter-spacing:0.043px;left:1176.05px;">12:45</div>
<div style="position:absolute;top:698px;height:18px;line-height:18px;font-size:12px;color:#dcdde2;white-space:pre;-webkit-text-stroke:0.2px #dcdde2;letter-spacing:0.043px;left:1230.40px;">12:50</div>
<div style="position:absolute;top:698px;height:18px;line-height:18px;font-size:12px;color:#dcdde2;white-space:pre;-webkit-text-stroke:0.2px #dcdde2;letter-spacing:0.043px;left:1284.75px;">12:55</div>
<div style="position:absolute;top:698px;height:18px;line-height:18px;font-size:12px;color:#dcdde2;white-space:pre;-webkit-text-stroke:0.2px #dcdde2;letter-spacing:0.043px;left:1339.10px;">13:00</div>
<div style="position:absolute;top:698px;height:18px;line-height:18px;font-size:12px;color:#dcdde2;white-space:pre;-webkit-text-stroke:0.2px #dcdde2;letter-spacing:0.043px;left:1393.45px;">13:05</div>
<div style="position:absolute;top:716px;height:18px;line-height:18px;font-size:12.6px;color:#16f5fa;white-space:pre;-webkit-text-stroke:0.5px #16f5fa;letter-spacing:-0.204px;left:776.50px;">Name</div>
<div style="position:absolute;top:716px;height:18px;line-height:18px;font-size:12.6px;color:#16f5fa;white-space:pre;-webkit-text-stroke:0.5px #16f5fa;letter-spacing:0.356px;left:1307.30px;">Last *</div>
<div style="position:absolute;top:716px;height:18px;line-height:18px;font-size:12.6px;color:#16f5fa;white-space:pre;-webkit-text-stroke:0.5px #16f5fa;letter-spacing:0.348px;left:1380.20px;">Max</div>
<div style="position:absolute;left:746px;top:737px;width:667px;height:60px;box-sizing:border-box;overflow:hidden;"><div style="position:absolute;left:0px;top:0px;width:667px;height:1px;box-sizing:border-box;background:#153944;"></div><div style="position:absolute;left:8px;top:9.6px;width:14px;height:4px;box-sizing:border-box;background:#73bf69;border-radius:2px;"></div><div style="position:absolute;top:3px;height:18px;line-height:18px;font-size:12.6px;color:#dcdfe4;white-space:pre;-webkit-text-stroke:0.15px #dcdfe4;letter-spacing:-0.256px;left:30.50px;">Ready</div><div style="position:absolute;top:3px;height:18px;line-height:18px;font-size:12.4px;color:#dcdfe4;white-space:pre;-webkit-text-stroke:0.15px #dcdfe4;left:588.90px;">5</div><div style="position:absolute;top:3px;height:18px;line-height:18px;font-size:12.4px;color:#dcdfe4;white-space:pre;-webkit-text-stroke:0.15px #dcdfe4;left:652.30px;">5</div><div style="position:absolute;left:0px;top:23px;width:667px;height:1px;box-sizing:border-box;background:#153944;"></div><div style="position:absolute;left:8px;top:32.6px;width:14px;height:4px;box-sizing:border-box;background:#f2cc0c;border-radius:2px;"></div><div style="position:absolute;top:26px;height:18px;line-height:18px;font-size:12.6px;color:#dcdfe4;white-space:pre;-webkit-text-stroke:0.15px #dcdfe4;left:30.50px;">Not Ready</div><div style="position:absolute;top:26px;height:18px;line-height:18px;font-size:12.4px;color:#dcdfe4;white-space:pre;-webkit-text-stroke:0.15px #dcdfe4;left:588.90px;">0</div><div style="position:absolute;top:26px;height:18px;line-height:18px;font-size:12.4px;color:#dcdfe4;white-space:pre;-webkit-text-stroke:0.15px #dcdfe4;left:652.30px;">0</div><div style="position:absolute;left:0px;top:47px;width:667px;height:1px;box-sizing:border-box;background:#153944;"></div><div style="position:absolute;left:8px;top:56.6px;width:14px;height:4px;box-sizing:border-box;background:#5794f2;border-radius:2px;"></div><div style="position:absolute;top:50px;height:18px;line-height:18px;font-size:12.6px;color:#dcdfe4;white-space:pre;-webkit-text-stroke:0.15px #dcdfe4;letter-spacing:0.181px;left:30.50px;">Scheduled</div><div style="position:absolute;top:50px;height:18px;line-height:18px;font-size:12.4px;color:#dcdfe4;white-space:pre;-webkit-text-stroke:0.15px #dcdfe4;left:588.90px;">5</div><div style="position:absolute;top:50px;height:18px;line-height:18px;font-size:12.4px;color:#dcdfe4;white-space:pre;-webkit-text-stroke:0.15px #dcdfe4;left:652.30px;">5</div><div style="position:absolute;left:0px;top:70px;width:667px;height:1px;box-sizing:border-box;background:#153944;"></div></div>
<div style="position:absolute;left:1416.5px;top:717.7px;width:6px;height:65.79999999999995px;box-sizing:border-box;background:#474e5b;border-radius:3px;"></div>
<svg style="position:absolute;left:12.1px;top:826.05px;" width="9.2" height="6.5" viewBox="0 0 9.2 6.5"><path d="M1.5 1.8 L4.6 4.3 L7.7 1.8" fill="none" stroke="#d6d9de" stroke-width="1.5" stroke-linecap="round" stroke-linejoin="round"/></svg>
<div style="position:absolute;top:818px;height:23px;line-height:23px;font-size:16.7px;color:#e4e7eb;white-space:pre;-webkit-text-stroke:0.65px #e4e7eb;letter-spacing:0.012px;left:33.20px;">Resource Requests &amp; Limits</div>
<div style="position:absolute;left:17px;top:844px;width:1px;height:303px;box-sizing:border-box;background:#143846;"></div>
<div style="position:absolute;left:33px;top:852px;width:696px;height:296px;box-sizing:border-box;background:#0e1a27;border:1px solid #143846;border-radius:6px;"></div>
<div style="position:absolute;top:863px;height:20px;line-height:20px;font-size:14.7px;color:#e1e4e9;white-space:pre;-webkit-text-stroke:0.55px #e1e4e9;letter-spacing:0.139px;left:46.20px;">CPU Requests by Container</div>
<div style="position:absolute;left:737px;top:852px;width:696px;height:296px;box-sizing:border-box;background:#0e1a27;border:1px solid #143846;border-radius:6px;"></div>
<div style="position:absolute;top:863px;height:20px;line-height:20px;font-size:14.7px;color:#e1e4e9;white-space:pre;-webkit-text-stroke:0.55px #e1e4e9;letter-spacing:0.300px;left:750.20px;">Memory Requests by Container</div>
<div style="position:absolute;left:33px;top:892px;width:696px;height:246.70000000000005px;box-sizing:border-box;overflow:hidden;"><div style="position:absolute;top:8px;height:18px;line-height:18px;font-size:12.6px;color:#e6e8ec;white-space:pre;-webkit-text-stroke:0.25px #e6e8ec;letter-spacing:0.411px;left:9.20px;">nutanix-csi-controller-87db9b6d7-x6qqx / ...</div><div style="position:absolute;left:280px;top:9px;width:268px;height:16px;box-sizing:border-box;background:#142030;border-radius:3px;"></div><div style="position:absolute;left:280px;top:9px;width:132px;height:16px;box-sizing:border-box;background:#5b93ee;border-radius:3px;"></div><div style="position:absolute;top:5px;height:24px;line-height:24px;font-size:17.6px;color:#5b96f0;white-space:pre;letter-spacing:-1.211px;left:622.00px;">0.100</div><div style="position:absolute;top:34px;height:18px;line-height:18px;font-size:12.6px;color:#e6e8ec;white-space:pre;-webkit-text-stroke:0.25px #e6e8ec;letter-spacing:0.411px;left:9.20px;">nutanix-csi-controller-87db9b6d7-gpzz2 / ...</div><div style="position:absolute;left:280px;top:35px;width:268px;height:16px;box-sizing:border-box;background:#142030;border-radius:3px;"></div><div style="position:absolute;left:280px;top:35px;width:132px;height:16px;box-sizing:border-box;background:#5b93ee;border-radius:3px;"></div><div style="position:absolute;top:31px;height:24px;line-height:24px;font-size:17.6px;color:#5b96f0;white-space:pre;letter-spacing:-1.211px;left:622.00px;">0.100</div><div style="position:absolute;top:60px;height:18px;line-height:18px;font-size:12.6px;color:#e6e8ec;white-space:pre;-webkit-text-stroke:0.25px #e6e8ec;letter-spacing:0.411px;left:9.20px;">nutanix-csi-controller-87db9b6d7-x6qqx / ...</div><div style="position:absolute;left:280px;top:61px;width:268px;height:16px;box-sizing:border-box;background:#142030;border-radius:3px;"></div><div style="position:absolute;left:280px;top:61px;width:132px;height:16px;box-sizing:border-box;background:#5b93ee;border-radius:3px;"></div><div style="position:absolute;top:57px;height:24px;line-height:24px;font-size:17.6px;color:#5b96f0;white-space:pre;letter-spacing:-1.211px;left:622.00px;">0.100</div><div style="position:absolute;top:86px;height:18px;line-height:18px;font-size:12.6px;color:#e6e8ec;white-space:pre;-webkit-text-stroke:0.25px #e6e8ec;letter-spacing:0.411px;left:9.20px;">nutanix-csi-controller-87db9b6d7-gpzz2 / ...</div><div style="position:absolute;left:280px;top:87px;width:268px;height:16px;box-sizing:border-box;background:#142030;border-radius:3px;"></div><div style="position:absolute;left:280px;top:87px;width:132px;height:16px;box-sizing:border-box;background:#5b93ee;border-radius:3px;"></div><div style="position:absolute;top:83px;height:24px;line-height:24px;font-size:17.6px;color:#5b96f0;white-space:pre;letter-spacing:-1.211px;left:622.00px;">0.100</div><div style="position:absolute;top:112px;height:18px;line-height:18px;font-size:12.6px;color:#e6e8ec;white-space:pre;-webkit-text-stroke:0.25px #e6e8ec;letter-spacing:0.411px;left:9.20px;">nutanix-csi-controller-87db9b6d7-x6qqx / ...</div><div style="position:absolute;left:280px;top:113px;width:268px;height:16px;box-sizing:border-box;background:#142030;border-radius:3px;"></div><div style="position:absolute;left:280px;top:113px;width:132px;height:16px;box-sizing:border-box;background:#5b93ee;border-radius:3px;"></div><div style="position:absolute;top:109px;height:24px;line-height:24px;font-size:17.6px;color:#5b96f0;white-space:pre;letter-spacing:-1.211px;left:622.00px;">0.100</div><div style="position:absolute;top:138px;height:18px;line-height:18px;font-size:12.6px;color:#e6e8ec;white-space:pre;-webkit-text-stroke:0.25px #e6e8ec;letter-spacing:0.411px;left:9.20px;">nutanix-csi-controller-87db9b6d7-gpzz2 / ...</div><div style="position:absolute;left:280px;top:139px;width:268px;height:16px;box-sizing:border-box;background:#142030;border-radius:3px;"></div><div style="position:absolute;left:280px;top:139px;width:132px;height:16px;box-sizing:border-box;background:#5b93ee;border-radius:3px;"></div><div style="position:absolute;top:135px;height:24px;line-height:24px;font-size:17.6px;color:#5b96f0;white-space:pre;letter-spacing:-1.211px;left:622.00px;">0.100</div><div style="position:absolute;top:164px;height:18px;line-height:18px;font-size:12.6px;color:#e6e8ec;white-space:pre;-webkit-text-stroke:0.25px #e6e8ec;letter-spacing:0.411px;left:9.20px;">nutanix-csi-controller-87db9b6d7-x6qqx / ...</div><div style="position:absolute;left:280px;top:165px;width:268px;height:16px;box-sizing:border-box;background:#142030;border-radius:3px;"></div><div style="position:absolute;left:280px;top:165px;width:1.4px;height:16px;box-sizing:border-box;background:#5794f2;"></div><div style="position:absolute;top:161px;height:24px;line-height:24px;font-size:17.6px;color:#5b96f0;white-space:pre;left:597.58px;">0.00500</div><div style="position:absolute;top:190px;height:18px;line-height:18px;font-size:12.6px;color:#e6e8ec;white-space:pre;-webkit-text-stroke:0.25px #e6e8ec;letter-spacing:0.411px;left:9.20px;">nutanix-csi-controller-87db9b6d7-gpzz2 / ...</div><div style="position:absolute;left:280px;top:191px;width:268px;height:16px;box-sizing:border-box;background:#142030;border-radius:3px;"></div><div style="position:absolute;left:280px;top:191px;width:1.4px;height:16px;box-sizing:border-box;background:#5794f2;"></div><div style="position:absolute;top:187px;height:24px;line-height:24px;font-size:17.6px;color:#5b96f0;white-space:pre;left:597.58px;">0.00500</div><div style="position:absolute;top:216px;height:18px;line-height:18px;font-size:12.6px;color:#e6e8ec;white-space:pre;-webkit-text-stroke:0.25px #e6e8ec;letter-spacing:0.401px;left:36.80px;">nutanix-csi-node-jmttd / driver-registrar</div><div style="position:absolute;left:280px;top:217px;width:268px;height:16px;box-sizing:border-box;background:#142030;border-radius:3px;"></div><div style="position:absolute;left:280px;top:217px;width:132px;height:16px;box-sizing:border-box;background:#5b93ee;border-radius:3px;"></div><div style="position:absolute;top:213px;height:24px;line-height:24px;font-size:17.6px;color:#5b96f0;white-space:pre;letter-spacing:-1.211px;left:622.00px;">0.100</div><div style="position:absolute;top:242px;height:18px;line-height:18px;font-size:12.6px;color:#e6e8ec;white-space:pre;-webkit-text-stroke:0.25px #e6e8ec;letter-spacing:0.295px;left:36.80px;">nutanix-csi-node-5d4f7 / driver-registrar</div><div style="position:absolute;left:280px;top:243px;width:268px;height:16px;box-sizing:border-box;background:#142030;border-radius:3px;"></div><div style="position:absolute;left:280px;top:243px;width:132px;height:16px;box-sizing:border-box;background:#5b93ee;border-radius:3px;"></div><div style="position:absolute;top:239px;height:24px;line-height:24px;font-size:17.6px;color:#5b96f0;white-space:pre;letter-spacing:-1.211px;left:622.00px;">0.100</div></div>
<div style="position:absolute;left:712px;top:904.4px;width:6px;height:100.0px;box-sizing:border-box;background:#474e5b;border-radius:3px;"></div>
<div style="position:absolute;left:737px;top:892px;width:696px;height:246.70000000000005px;box-sizing:border-box;overflow:hidden;"><div style="position:absolute;top:8px;height:18px;line-height:18px;font-size:12.6px;color:#e6e8ec;white-space:pre;-webkit-text-stroke:0.25px #e6e8ec;letter-spacing:0.411px;left:9.20px;">nutanix-csi-controller-87db9b6d7-x6qqx / ...</div><div style="position:absolute;left:280px;top:9px;width:268px;height:16px;box-sizing:border-box;background:#142030;border-radius:3px;"></div><div style="position:absolute;left:280px;top:9px;width:271px;height:16px;box-sizing:border-box;background:#5b93ee;border-radius:3px;"></div><div style="position:absolute;top:7px;height:21px;line-height:21px;font-size:15.5px;color:#5b96f0;white-space:pre;letter-spacing:-0.747px;left:636.30px;">MiB</div><div style="position:absolute;top:5px;height:24px;line-height:24px;font-size:17.6px;color:#5b96f0;white-space:pre;left:600.73px;">200</div><div style="position:absolute;top:34px;height:18px;line-height:18px;font-size:12.6px;color:#e6e8ec;white-space:pre;-webkit-text-stroke:0.25px #e6e8ec;letter-spacing:0.411px;left:9.20px;">nutanix-csi-controller-87db9b6d7-gpzz2 / ...</div><div style="position:absolute;left:280px;top:35px;width:268px;height:16px;box-sizing:border-box;background:#142030;border-radius:3px;"></div><div style="position:absolute;left:280px;top:35px;width:271px;height:16px;box-sizing:border-box;background:#5b93ee;border-radius:3px;"></div><div style="position:absolute;top:33px;height:21px;line-height:21px;font-size:15.5px;color:#5b96f0;white-space:pre;letter-spacing:-0.747px;left:636.30px;">MiB</div><div style="position:absolute;top:31px;height:24px;line-height:24px;font-size:17.6px;color:#5b96f0;white-space:pre;left:600.73px;">200</div><div style="position:absolute;top:60px;height:18px;line-height:18px;font-size:12.6px;color:#e6e8ec;white-space:pre;-webkit-text-stroke:0.25px #e6e8ec;letter-spacing:0.411px;left:9.20px;">nutanix-csi-controller-87db9b6d7-x6qqx / ...</div><div style="position:absolute;left:280px;top:61px;width:268px;height:16px;box-sizing:border-box;background:#142030;border-radius:3px;"></div><div style="position:absolute;left:280px;top:61px;width:271px;height:16px;box-sizing:border-box;background:#5b93ee;border-radius:3px;"></div><div style="position:absolute;top:59px;height:21px;line-height:21px;font-size:15.5px;color:#5b96f0;white-space:pre;letter-spacing:-0.747px;left:636.30px;">MiB</div><div style="position:absolute;top:57px;height:24px;line-height:24px;font-size:17.6px;color:#5b96f0;white-space:pre;left:600.73px;">200</div><div style="position:absolute;top:86px;height:18px;line-height:18px;font-size:12.6px;color:#e6e8ec;white-space:pre;-webkit-text-stroke:0.25px #e6e8ec;letter-spacing:0.411px;left:9.20px;">nutanix-csi-controller-87db9b6d7-gpzz2 / ...</div><div style="position:absolute;left:280px;top:87px;width:268px;height:16px;box-sizing:border-box;background:#142030;border-radius:3px;"></div><div style="position:absolute;left:280px;top:87px;width:271px;height:16px;box-sizing:border-box;background:#5b93ee;border-radius:3px;"></div><div style="position:absolute;top:85px;height:21px;line-height:21px;font-size:15.5px;color:#5b96f0;white-space:pre;letter-spacing:-0.747px;left:636.30px;">MiB</div><div style="position:absolute;top:83px;height:24px;line-height:24px;font-size:17.6px;color:#5b96f0;white-space:pre;left:600.73px;">200</div><div style="position:absolute;top:112px;height:18px;line-height:18px;font-size:12.6px;color:#e6e8ec;white-space:pre;-webkit-text-stroke:0.25px #e6e8ec;letter-spacing:0.411px;left:9.20px;">nutanix-csi-controller-87db9b6d7-x6qqx / ...</div><div style="position:absolute;left:280px;top:113px;width:268px;height:16px;box-sizing:border-box;background:#142030;border-radius:3px;"></div><div style="position:absolute;left:280px;top:113px;width:271px;height:16px;box-sizing:border-box;background:#5b93ee;border-radius:3px;"></div><div style="position:absolute;top:111px;height:21px;line-height:21px;font-size:15.5px;color:#5b96f0;white-space:pre;letter-spacing:-0.747px;left:636.30px;">MiB</div><div style="position:absolute;top:109px;height:24px;line-height:24px;font-size:17.6px;color:#5b96f0;white-space:pre;left:600.73px;">200</div><div style="position:absolute;top:138px;height:18px;line-height:18px;font-size:12.6px;color:#e6e8ec;white-space:pre;-webkit-text-stroke:0.25px #e6e8ec;letter-spacing:0.411px;left:9.20px;">nutanix-csi-controller-87db9b6d7-gpzz2 / ...</div><div style="position:absolute;left:280px;top:139px;width:268px;height:16px;box-sizing:border-box;background:#142030;border-radius:3px;"></div><div style="position:absolute;left:280px;top:139px;width:271px;height:16px;box-sizing:border-box;background:#5b93ee;border-radius:3px;"></div><div style="position:absolute;top:137px;height:21px;line-height:21px;font-size:15.5px;color:#5b96f0;white-space:pre;letter-spacing:-0.747px;left:636.30px;">MiB</div><div style="position:absolute;top:135px;height:24px;line-height:24px;font-size:17.6px;color:#5b96f0;white-space:pre;left:600.73px;">200</div><div style="position:absolute;top:164px;height:18px;line-height:18px;font-size:12.6px;color:#e6e8ec;white-space:pre;-webkit-text-stroke:0.25px #e6e8ec;letter-spacing:0.411px;left:9.20px;">nutanix-csi-controller-87db9b6d7-x6qqx / ...</div><div style="position:absolute;left:280px;top:165px;width:268px;height:16px;box-sizing:border-box;background:#142030;border-radius:3px;"></div><div style="position:absolute;left:280px;top:165px;width:15px;height:16px;box-sizing:border-box;background:#5b93ee;border-radius:3px;"></div><div style="position:absolute;top:163px;height:21px;line-height:21px;font-size:15.5px;color:#5b96f0;white-space:pre;letter-spacing:-0.747px;left:636.30px;">MiB</div><div style="position:absolute;top:161px;height:24px;line-height:24px;font-size:17.6px;color:#5b96f0;white-space:pre;left:610.52px;">30</div><div style="position:absolute;top:190px;height:18px;line-height:18px;font-size:12.6px;color:#e6e8ec;white-space:pre;-webkit-text-stroke:0.25px #e6e8ec;letter-spacing:0.411px;left:9.20px;">nutanix-csi-controller-87db9b6d7-gpzz2 / ...</div><div style="position:absolute;left:280px;top:191px;width:268px;height:16px;box-sizing:border-box;background:#142030;border-radius:3px;"></div><div style="position:absolute;left:280px;top:191px;width:15px;height:16px;box-sizing:border-box;background:#5b93ee;border-radius:3px;"></div><div style="position:absolute;top:189px;height:21px;line-height:21px;font-size:15.5px;color:#5b96f0;white-space:pre;letter-spacing:-0.747px;left:636.30px;">MiB</div><div style="position:absolute;top:187px;height:24px;line-height:24px;font-size:17.6px;color:#5b96f0;white-space:pre;left:610.52px;">30</div><div style="position:absolute;top:216px;height:18px;line-height:18px;font-size:12.6px;color:#e6e8ec;white-space:pre;-webkit-text-stroke:0.25px #e6e8ec;letter-spacing:0.401px;left:36.80px;">nutanix-csi-node-jmttd / driver-registrar</div><div style="position:absolute;left:280px;top:217px;width:268px;height:16px;box-sizing:border-box;background:#142030;border-radius:3px;"></div><div style="position:absolute;left:280px;top:217px;width:271px;height:16px;box-sizing:border-box;background:#5b93ee;border-radius:3px;"></div><div style="position:absolute;top:215px;height:21px;line-height:21px;font-size:15.5px;color:#5b96f0;white-space:pre;letter-spacing:-0.747px;left:636.30px;">MiB</div><div style="position:absolute;top:213px;height:24px;line-height:24px;font-size:17.6px;color:#5b96f0;white-space:pre;left:600.73px;">200</div><div style="position:absolute;top:242px;height:18px;line-height:18px;font-size:12.6px;color:#e6e8ec;white-space:pre;-webkit-text-stroke:0.25px #e6e8ec;letter-spacing:0.295px;left:36.80px;">nutanix-csi-node-5d4f7 / driver-registrar</div><div style="position:absolute;left:280px;top:243px;width:268px;height:16px;box-sizing:border-box;background:#142030;border-radius:3px;"></div><div style="position:absolute;left:280px;top:243px;width:271px;height:16px;box-sizing:border-box;background:#5b93ee;border-radius:3px;"></div><div style="position:absolute;top:241px;height:21px;line-height:21px;font-size:15.5px;color:#5b96f0;white-space:pre;letter-spacing:-0.747px;left:636.30px;">MiB</div><div style="position:absolute;top:239px;height:24px;line-height:24px;font-size:17.6px;color:#5b96f0;white-space:pre;left:600.73px;">200</div></div>
<div style="position:absolute;left:1416.5px;top:904px;width:6px;height:99.60000000000002px;box-sizing:border-box;background:#474e5b;border-radius:3px;"></div>
<div style="position:absolute;left:842px;top:297px;width:527px;height:338px;box-sizing:border-box;background:#142132;border:1px solid #1b3948;border-radius:6px;box-shadow:0 4px 14px rgba(0,0,0,0.55);"><div style="position:absolute;top:6px;height:18px;line-height:18px;font-size:12.6px;color:#e3e6ea;white-space:pre;-webkit-text-stroke:0.45px #e3e6ea;letter-spacing:0.406px;left:8.00px;">2026-03-01 13:02:00</div><div style="position:absolute;left:0px;top:30px;width:525px;height:1px;box-sizing:border-box;background:#1c3745;"></div><div style="position:absolute;left:8px;top:45.60000000000002px;width:14px;height:4px;box-sizing:border-box;background:#a961c9;border-radius:2px;"></div><div style="position:absolute;top:39px;height:18px;line-height:18px;font-size:12.6px;color:#bfc4cc;white-space:pre;letter-spacing:0.443px;left:31.60px;">nutanix-csi-controller-87db9b6d7-x6qqx / csi-provisioner</div><div style="position:absolute;top:39px;height:18px;line-height:18px;font-size:12px;color:#e3e6ea;white-space:pre;font-weight:700;letter-spacing:-0.934px;left:504.29px;">13</div><div style="position:absolute;left:8px;top:66.69999999999999px;width:14px;height:4px;box-sizing:border-box;background:#ff9830;border-radius:2px;"></div><div style="position:absolute;top:60px;height:18px;line-height:18px;font-size:12.6px;color:#bfc4cc;white-space:pre;letter-spacing:0.449px;left:31.60px;">nutanix-csi-controller-87db9b6d7-x6qqx / csi-snapshotter</div><div style="position:absolute;top:60px;height:18px;line-height:18px;font-size:12px;color:#e3e6ea;white-space:pre;font-weight:700;letter-spacing:-0.934px;left:504.29px;">13</div><div style="position:absolute;left:8px;top:87.80000000000001px;width:14px;height:4px;box-sizing:border-box;background:#fff899;border-radius:2px;"></div><div style="position:absolute;top:81px;height:18px;line-height:18px;font-size:12.6px;color:#bfc4cc;white-space:pre;letter-spacing:0.443px;left:31.60px;">nutanix-csi-controller-87db9b6d7-x6qqx / nutanix-csi-plugin</div><div style="position:absolute;top:81px;height:18px;line-height:18px;font-size:12px;color:#e3e6ea;white-space:pre;font-weight:700;letter-spacing:-0.934px;left:504.29px;">13</div><div style="position:absolute;left:8px;top:108.5px;width:14px;height:4px;box-sizing:border-box;background:#f2cc0c;border-radius:2px;"></div><div style="position:absolute;top:102px;height:18px;line-height:18px;font-size:12.6px;color:#bfc4cc;white-space:pre;letter-spacing:0.441px;left:31.60px;">nutanix-csi-controller-87db9b6d7-x6qqx / csi-resizer</div><div style="position:absolute;top:102px;height:18px;line-height:18px;font-size:12px;color:#e3e6ea;white-space:pre;font-weight:700;letter-spacing:-0.888px;left:504.90px;">11</div><div style="position:absolute;left:8px;top:129.5px;width:14px;height:4px;box-sizing:border-box;background:#f2cc0c;border-radius:2px;"></div><div style="position:absolute;top:123px;height:18px;line-height:18px;font-size:12.3px;color:#f0f2f5;white-space:pre;font-weight:700;letter-spacing:0.217px;left:31.60px;">nutanix-csi-controller-87db9b6d7-x6qqx / csi-attacher</div><div style="position:absolute;top:123px;height:18px;line-height:18px;font-size:12px;color:#f0f2f5;white-space:pre;font-weight:700;left:510.03px;">8</div><div style="position:absolute;left:8px;top:150.60000000000002px;width:14px;height:4px;box-sizing:border-box;background:#ff9830;border-radius:2px;"></div><div style="position:absolute;top:144px;height:18px;line-height:18px;font-size:12.6px;color:#bfc4cc;white-space:pre;letter-spacing:0.436px;left:31.60px;">nutanix-csi-controller-87db9b6d7-x6qqx / csi-external-health-monitor-controller</div><div style="position:absolute;top:144px;height:18px;line-height:18px;font-size:12px;color:#e3e6ea;white-space:pre;font-weight:700;left:510.03px;">8</div><div style="position:absolute;left:8px;top:170.89999999999998px;width:14px;height:4px;box-sizing:border-box;background:#7d6f50;border-radius:2px;"></div><div style="position:absolute;top:164px;height:18px;line-height:18px;font-size:12.6px;color:#bfc4cc;white-space:pre;letter-spacing:0.441px;left:31.60px;">nutanix-csi-controller-87db9b6d7-gpzz2 / csi-resizer</div><div style="position:absolute;top:164px;height:18px;line-height:18px;font-size:12px;color:#e3e6ea;white-space:pre;font-weight:700;left:510.03px;">5</div><div style="position:absolute;left:8px;top:191.5px;width:14px;height:4px;box-sizing:border-box;background:#73bf69;border-radius:2px;"></div><div style="position:absolute;top:185px;height:18px;line-height:18px;font-size:12.6px;color:#bfc4cc;white-space:pre;letter-spacing:0.444px;left:31.60px;">nutanix-csi-controller-87db9b6d7-gpzz2 / csi-attacher</div><div style="position:absolute;top:185px;height:18px;line-height:18px;font-size:12px;color:#e3e6ea;white-space:pre;font-weight:700;left:510.03px;">4</div><div style="position:absolute;left:8px;top:212.60000000000002px;width:14px;height:4px;box-sizing:border-box;background:#5794f2;border-radius:2px;"></div><div style="position:absolute;top:206px;height:18px;line-height:18px;font-size:12.6px;color:#bfc4cc;white-space:pre;letter-spacing:0.436px;left:31.60px;">nutanix-csi-controller-87db9b6d7-gpzz2 / csi-external-health-monitor-controller</div><div style="position:absolute;top:206px;height:18px;line-height:18px;font-size:12px;color:#e3e6ea;white-space:pre;font-weight:700;left:510.03px;">4</div><div style="position:absolute;left:8px;top:233.70000000000005px;width:14px;height:4px;box-sizing:border-box;background:#e02f44;border-radius:2px;"></div><div style="position:absolute;top:227px;height:18px;line-height:18px;font-size:12.6px;color:#bfc4cc;white-space:pre;letter-spacing:0.443px;left:31.60px;">nutanix-csi-controller-87db9b6d7-gpzz2 / csi-provisioner</div><div style="position:absolute;top:227px;height:18px;line-height:18px;font-size:12px;color:#e3e6ea;white-space:pre;font-weight:700;left:510.03px;">4</div><div style="position:absolute;left:8px;top:254.79999999999995px;width:14px;height:4px;box-sizing:border-box;background:#5286d8;border-radius:2px;"></div><div style="position:absolute;top:248px;height:18px;line-height:18px;font-size:12.6px;color:#bfc4cc;white-space:pre;letter-spacing:0.449px;left:31.60px;">nutanix-csi-controller-87db9b6d7-gpzz2 / csi-snapshotter</div><div style="position:absolute;top:248px;height:18px;line-height:18px;font-size:12px;color:#e3e6ea;white-space:pre;font-weight:700;left:510.03px;">4</div><div style="position:absolute;left:8px;top:275.79999999999995px;width:14px;height:4px;box-sizing:border-box;background:#e4e4e4;border-radius:2px;"></div><div style="position:absolute;top:269px;height:18px;line-height:18px;font-size:12.6px;color:#bfc4cc;white-space:pre;letter-spacing:0.443px;left:31.60px;">nutanix-csi-controller-87db9b6d7-gpzz2 / nutanix-csi-plugin</div><div style="position:absolute;top:269px;height:18px;line-height:18px;font-size:12px;color:#e3e6ea;white-space:pre;font-weight:700;left:510.03px;">4</div><div style="position:absolute;left:8px;top:296.5px;width:14px;height:4px;box-sizing:border-box;background:#e02f44;border-radius:2px;"></div><div style="position:absolute;top:290px;height:18px;line-height:18px;font-size:12.6px;color:#bfc4cc;white-space:pre;letter-spacing:0.452px;left:31.60px;">nutanix-csi-controller-87db9b6d7-gpzz2 / liveness-probe</div><div style="position:absolute;top:290px;height:18px;line-height:18px;font-size:12px;color:#e3e6ea;white-space:pre;font-weight:700;left:510.03px;">2</div><div style="position:absolute;left:8px;top:316.70000000000005px;width:14px;height:4px;box-sizing:border-box;background:#a961c9;border-radius:2px;"></div><div style="position:absolute;top:310px;height:18px;line-height:18px;font-size:12.6px;color:#bfc4cc;white-space:pre;letter-spacing:0.452px;left:31.60px;">nutanix-csi-controller-87db9b6d7-x6qqx / liveness-probe</div><div style="position:absolute;top:310px;height:18px;line-height:18px;font-size:12px;color:#e3e6ea;white-space:pre;font-weight:700;left:510.03px;">2</div></div>
<svg style="position:absolute;left:1377px;top:285px;" width="14" height="20" viewBox="0 0 14 20"><path d="M1.5 1.5 L1.5 15.2 L4.8 12.2 L7.2 17.6 L9.6 16.5 L7.2 11.3 L11.6 11.3 Z" fill="#0a0a0a" stroke="#f4f4f4" stroke-width="1.1" stroke-linejoin="round"/></svg>
</div></body></html>
